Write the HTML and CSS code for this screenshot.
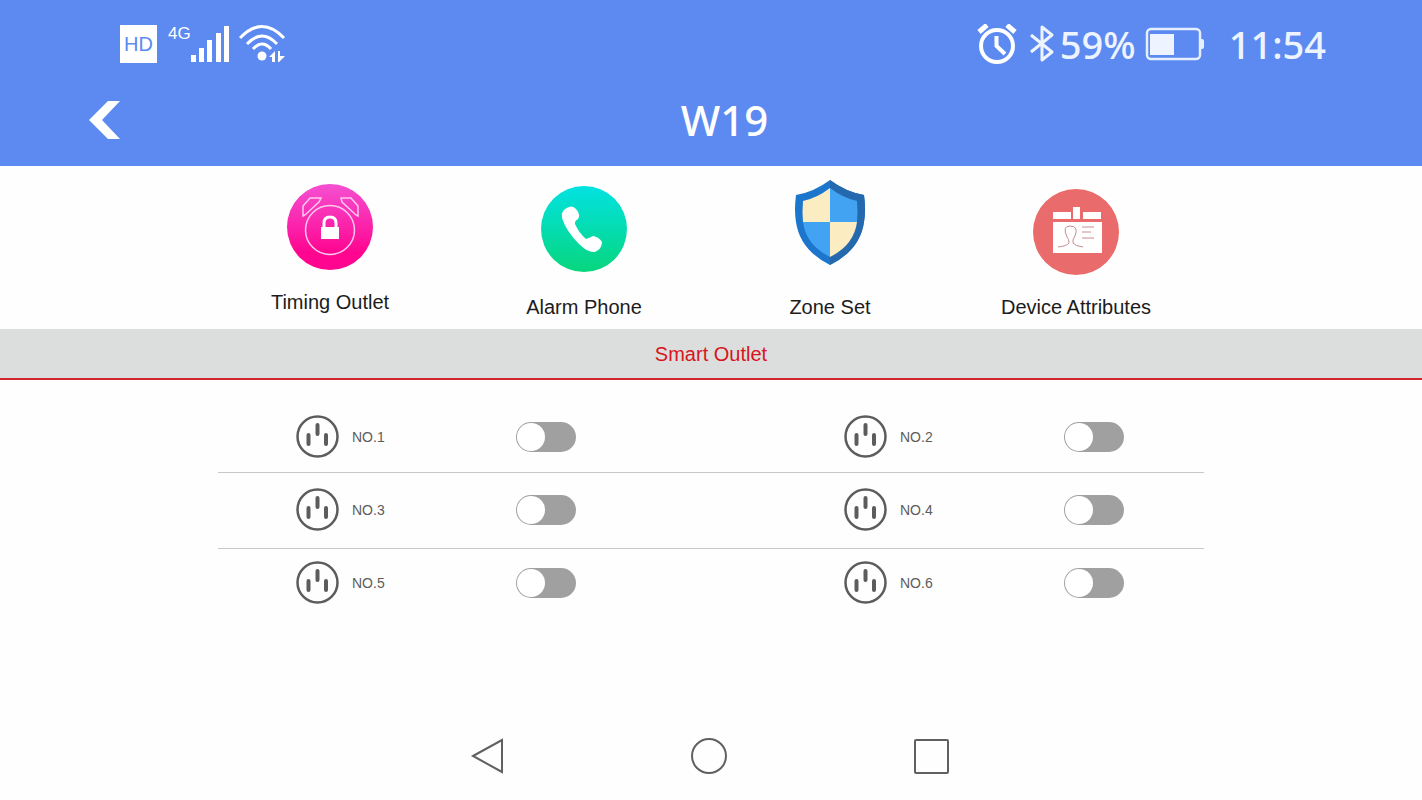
FILE: index.html
```html
<!DOCTYPE html>
<html lang="en">
<head>
  <meta charset="UTF-8" />
  <meta name="viewport" content="width=device-width, initial-scale=1.0" />
  <title>W19</title>
  <link rel="stylesheet" href="styles.css">
</head>
<body>
  <header class="header">
    <div class="status">
      <div class="status-left">
        <span class="hd">HD</span>
        <span class="network">4G</span>
        <svg class="signal" width="40" height="38" viewBox="0 0 40 38" fill="#fff">
          <path d="M0 30h5v7H0zM8 23h5v14H8zM16 15h5v22h-5zM25 8h5v29h-5zM33 1h5v36h-5z" />
        </svg>
        <svg width="48" height="38" viewBox="0 0 48 38" fill="none" stroke="#fff" stroke-width="3">
          <path d="M1 13Q23-10 45 13M8 19Q23 3 38 19M14 24Q23 14 32 24" />
          <circle cx="23" cy="31" r="4.5" fill="#fff" stroke="none" />
          <path d="M30 32L36 26V37H33V32zM39 26H41V31H46L40 37H39z" fill="#fff" stroke="none" />
        </svg>
      </div>
      <div class="status-right">
        <svg width="40" height="40" viewBox="0 0 40 40" fill="none" stroke="#fff" stroke-width="4">
          <circle cx="20" cy="22" r="16" />
          <path d="M2 8L10 1M30 1L38 8" stroke-width="5" />
          <path d="M19.5 12V22L28 30" />
        </svg>
        <svg class="bluetooth" width="26" height="40" viewBox="0 0 26 40" fill="none" stroke="#eef4ff" stroke-width="3" stroke-linejoin="round">
          <path d="M2 11L23 28L13 36V3L23 11L2 28" />
        </svg>
        <span class="percent">59%</span>
        <svg class="battery" width="60" height="34" viewBox="0 0 60 34" fill="none" stroke="#e6efff" stroke-width="2.5">
          <rect x="2" y="2" width="53" height="30" rx="4" />
          <path d="M5 7H29V28H5z" fill="#eef4ff" stroke="none" />
          <path d="M56 12H57Q59 12 59 14V20Q59 22 57 22H56z" fill="#e6efff" stroke="none" />
        </svg>
        <span class="time">11:54</span>
      </div>
    </div>
    <div class="title-bar">
      <button class="back" type="button" aria-label="Back">
        <svg width="32" height="38" viewBox="0 0 32 38" fill="#fff">
          <path d="M19 0H31L13 19L31 38H19L0 19z" />
        </svg>
      </button>
      <h1>W19</h1>
    </div>
  </header>

  <main>
    <div class="menu">
      <button class="menu-item timing" type="button">
        <svg width="86" height="86" viewBox="0 0 86 86">
          <defs>
            <linearGradient id="pink" x1="0" y1="0" x2="0" y2="1">
              <stop offset="0" stop-color="#f550d2" />
              <stop offset="0.8" stop-color="#ff0590" />
            </linearGradient>
          </defs>
          <circle cx="43" cy="43" r="43" fill="url(#pink)" />
          <g fill="none" stroke="#ffc9ee" stroke-width="1.5">
            <circle cx="43" cy="46" r="24.5" />
            <path d="M16 32V22L23 14H34L32 18L18 31zM71 32V22L64 14H54L55 18L69 31z" />
          </g>
          <path d="M37 44V39Q37 33 43 33T49 39V44" fill="none" stroke="#fff" stroke-width="3" />
          <path d="M34 43H52V55H34z" fill="#fff" />
        </svg>
        Timing Outlet
      </button>
      <button class="menu-item" type="button">
        <svg width="86" height="86" viewBox="0 0 86 86">
          <defs>
            <linearGradient id="green" x1="0" y1="0" x2="0" y2="1">
              <stop offset="0" stop-color="#02e2e2" />
              <stop offset="1" stop-color="#07d67d" />
            </linearGradient>
          </defs>
          <circle cx="43" cy="43" r="43" fill="url(#green)" />
          <path d="M24 23Q31 18 35 23Q40 29 37 33Q32 36 35 40Q39 48 45 53Q48 52 52 50Q58 51 61 56Q61 63 54 66Q47 67 38 58Q25 45 21 32Q20 26 24 23z" fill="#fff" />
        </svg>
        Alarm Phone
      </button>
      <button class="menu-item zone" type="button">
        <svg width="70" height="86" viewBox="0 0 70 86">
          <path d="M35 0Q51 12 69 15Q71 30 69 42Q65 70 35 85Q5 70 1 42Q-1 30 1 15Q19 12 35 0z" fill="#1b76cc" />
          <path d="M35 0Q51 12 69 15Q71 30 69 42Q65 70 35 85z" fill="#2469ad" />
          <path d="M35 8Q22 18 8 21Q7 32 8 42H35z" fill="#fcecc2" />
          <path d="M35 8Q48 18 62 21Q63 32 62 42H35z" fill="#42a3f3" />
          <path d="M8 42H35V77Q11 65 8 42z" fill="#42a3f3" />
          <path d="M35 42H62Q59 65 35 77z" fill="#fcecc2" />
        </svg>
        Zone Set
      </button>
      <button class="menu-item device" type="button">
        <svg width="86" height="86" viewBox="0 0 86 86">
          <circle cx="43" cy="43" r="43" fill="#ea6b6c" />
          <path d="M20 23H38V30H20zM40 18H47V30H40zM50 23H68V30H50zM20 33H69V64H20z" fill="#fff" />
          <path d="M25 58Q34 57 36 54Q36 50 34 48Q29 37 37 37Q46 37 42 47Q39 51 40 54Q42 57 50 58M49 38H61M49 43H58M49 49H61" fill="none" stroke="#c98a90" stroke-width="1" />
        </svg>
        Device Attributes
      </button>
    </div>

    <h2>Smart Outlet</h2>

    <div class="outlets" id="outlets"></div>
  </main>

  <nav class="nav">
    <button type="button" aria-label="Back">
      <svg width="38" height="38" viewBox="0 0 38 38"><path d="M5 19L34 3V35z" /></svg>
    </button>
    <button type="button" aria-label="Home">
      <svg width="38" height="38" viewBox="0 0 38 38"><circle cx="19" cy="19" r="17" /></svg>
    </button>
    <button type="button" aria-label="Recent apps">
      <svg width="38" height="38" viewBox="0 0 38 38"><rect x="3" y="3" width="33" height="33" rx="1" /></svg>
    </button>
  </nav>

  <script>
    const outlets = document.getElementById('outlets');

    for (let row = 0; row < 3; row++) {
      const div = document.createElement('div');
      div.classList.add('outlet-row');
      [row * 2 + 1, row * 2 + 2].forEach(n => {
        div.innerHTML += `
          <div class="outlet">
            <label for="outlet${n}">
              <svg width="43" height="43" viewBox="0 0 43 43" fill="none" stroke="#5c5c5c">
                <circle cx="21.5" cy="21.5" r="20" stroke-width="2.5" />
                <path d="M12.5 20V29M21.5 10V19M30 20V29" stroke-width="4" stroke-linecap="round" />
              </svg>
              NO.${n}
            </label>
            <input type="checkbox" id="outlet${n}" />
          </div>`;
      });
      outlets.appendChild(div);
    }
  </script>
</body>
</html>
```
FILE: styles.css
```css
* {
  box-sizing: border-box;
}
body {
  margin: 0;
  min-height: 100vh;
  display: flex;
  flex-direction: column;
  background: #fefefe;
  color: #1c1c1c;
  font-family: "Liberation Sans", Arial, sans-serif;
}
button {
  padding: 0;
  border: none;
  background: none;
  color: inherit;
  font: inherit;
  cursor: pointer;
}
svg {
  display: block;
  flex-shrink: 0;
}

/* header */
.header {
  padding-bottom: 16px;
  background: #5c8af0;
  color: #fff;
}
.status {
  display: flex;
  justify-content: space-between;
  height: 90px;
  padding: 0 96px 2px 120px;
}
.status-left, .status-right {
  display: flex;
  align-items: center;
}
.hd {
  width: 37px;
  background: #fff;
  color: #5c8af0;
  font-size: 20px;
  line-height: 38px;
  text-align: center;
}
.network {
  align-self: flex-start;
  margin: 24px 0 0 11px;
  font-size: 17px;
  line-height: 20px;
}
.signal {
  margin-right: 8px;
}
.percent, .time {
  color: #eef4ff;
  font-family: "Noto Sans", sans-serif;
  font-size: 38px;
  font-weight: 500;
  line-height: 48px;
}
.bluetooth {
  margin: 0 5px 0 12px;
}
.battery {
  margin: 0 24px 0 9px;
}
.title-bar {
  display: grid;
  grid-template-columns: 1fr auto 1fr;
  align-items: center;
  padding: 0 62px 0 89px;
}
.back {
  justify-self: start;
}
h1 {
  margin: 0;
  font-family: "Noto Sans", sans-serif;
  font-size: 42px;
  font-weight: 500;
  line-height: 60px;
}

/* menu */
.menu {
  display: grid;
  grid-template-columns: 254fr 254fr 238fr 254fr;
  padding: 14px 219px 10px 203px;
}
.menu-item {
  display: flex;
  flex-direction: column;
  align-items: center;
  justify-content: flex-end;
  gap: 23px;
  font-size: 20px;
  line-height: 24px;
}
.timing {
  gap: 20px;
  padding-bottom: 5px;
}
.zone {
  gap: 29px;
}
.device {
  gap: 20px;
}
h2 {
  margin: 0;
  padding-top: 2px;
  border-bottom: 2px solid #d3262e;
  background: #dcdedd;
  color: #d8141c;
  font-size: 20px;
  font-weight: normal;
  line-height: 47px;
  text-align: center;
}

/* outlets */
.outlets {
  padding: 21px 218px;
}
.outlet-row {
  display: grid;
  grid-template-columns: 548fr 438fr;
  height: 71px;
}
.outlet-row + .outlet-row {
  height: 68px;
  border-top: 1px solid #c8c8c8;
}
.outlet-row:nth-child(2) {
  height: 76px;
  padding-bottom: 2px;
}
.outlet {
  display: flex;
  align-items: center;
  padding-left: 78px;
}
.outlet label {
  display: flex;
  align-items: center;
  gap: 13px;
  width: 220px;
  color: #5c5c5c;
  font-size: 14px;
}
.outlet input {
  appearance: none;
  width: 60px;
  height: 30px;
  margin: 0;
  padding: 1px;
  border-radius: 15px;
  background: #a0a0a0;
  cursor: pointer;
}
.outlet input::before {
  content: "";
  display: block;
  width: 28px;
  height: 28px;
  border-radius: 50%;
  background: #fff;
}
.outlet input:checked {
  background: #5c8af0;
}
.outlet input:checked::before {
  margin-left: auto;
}

/* bottom navigation */
.nav {
  display: flex;
  justify-content: center;
  gap: 184px;
  margin-top: auto;
  padding: 0 4px 25px 0;
}
.nav svg {
  fill: none;
  stroke: #606060;
  stroke-width: 2;
}
```
